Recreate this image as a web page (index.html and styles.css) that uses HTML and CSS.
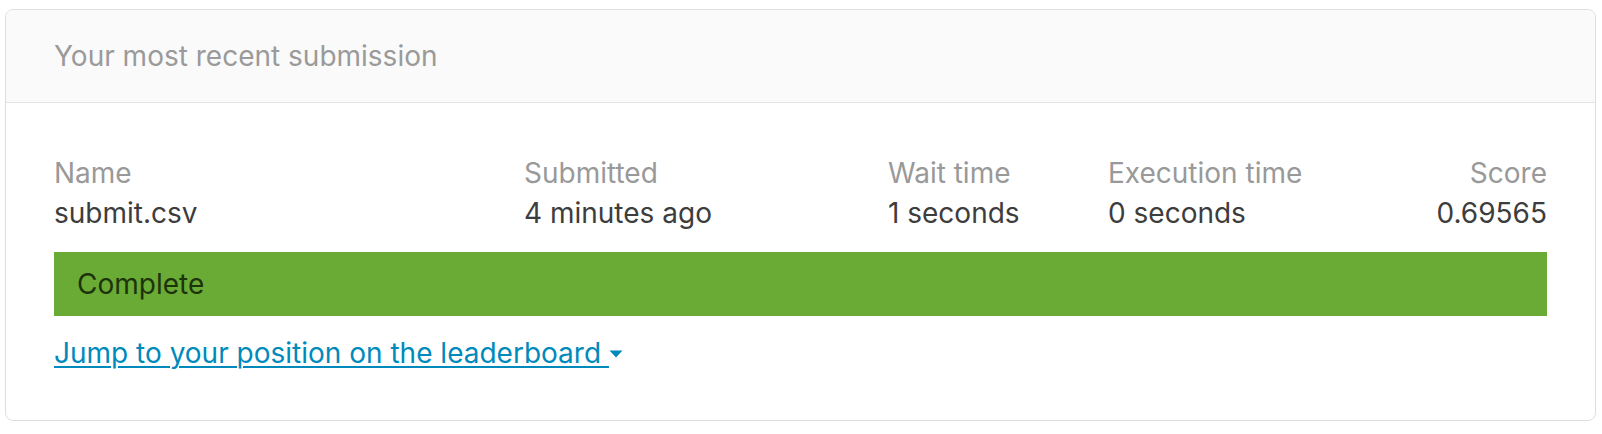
FILE: index.html
```html
<!DOCTYPE html>
<html lang="en">
<head>
<meta charset="utf-8">
<title>Your most recent submission</title>
<link rel="stylesheet" href="styles.css">
</head>
<body>
<section class="card">
  <header class="card-header">Your most recent submission</header>
  <div class="card-body">
    <div class="grid">
      <div class="label">Name</div>
      <div class="label">Submitted</div>
      <div class="label">Wait time</div>
      <div class="label">Execution time</div>
      <div class="label right">Score</div>
      <div class="value">submit.csv</div>
      <div class="value">4 minutes ago</div>
      <div class="value">1 seconds</div>
      <div class="value">0 seconds</div>
      <div class="value right">0.69565</div>
    </div>
    <div class="status">Complete</div>
    <a class="jump" href="#"><span class="jump-text">Jump to your position on the leaderboard </span><svg class="caret" width="14" height="8" viewBox="0 0 14 8"><path d="M0.5 0.5 L13.5 0.5 L7 7.5 Z" fill="#008abc"/></svg></a>
  </div>
</section>
</body>
</html>
```

FILE: styles.css
```css
* { box-sizing: border-box; }
body {
  margin: 0;
  padding: 9px 6px 0 5px;
  background: #fff;
  font-family: "Inter", "Liberation Sans", sans-serif;
  font-size: 28px;
}
.card {
  border: 1px solid #dedede;
  border-radius: 8px;
  overflow: hidden;
}
.card-header {
  height: 93px;
  line-height: 92px;
  padding: 0 48px;
  background: #fafafa;
  border-bottom: 1px solid #e4e4e4;
  color: #9a9a9a;
}
.card-body {
  padding: 50px 48px 47px;
}
.grid {
  display: grid;
  grid-template-columns: 470px 364px 220px 1fr auto;
  line-height: 40px;
}
.label { color: #999999; }
.value { color: #3d3d3d; }
.right { text-align: right; }
.status {
  margin-top: 19px;
  height: 64px;
  line-height: 64px;
  padding: 0 23px;
  background: #6aab35;
  color: #1d330c;
}
.jump {
  display: inline-flex;
  align-items: center;
  margin-top: 17px;
  line-height: 40px;
  color: #008abc;
  text-decoration: none;
}
.jump-text {
  text-decoration: underline;
  text-underline-offset: 3px;
  text-decoration-thickness: 1.5px;
  white-space: pre;
}
.caret { display: block; margin-top: 1px; }
```
